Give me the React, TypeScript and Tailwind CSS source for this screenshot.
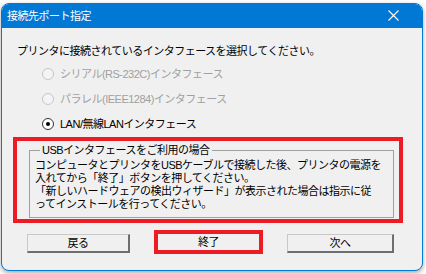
import React from "react";

const Radio = ({ label, checked, disabled }: { label: string; checked?: boolean; disabled?: boolean }) => (
  <div className="h-[25px] flex items-center">
    <span
      className={`w-[12px] h-[12px] rounded-full border flex items-center justify-center ${
        disabled ? "border-[#c6c6c6] bg-[#f4f4f4]" : "border-[#333333] bg-white"
      }`}
    >
      {checked && <span className="w-[4px] h-[4px] rounded-full bg-black" />}
    </span>
    <span className={`ml-[6px] ${disabled ? "text-[#a0a0a0]" : "text-black"}`}>{label}</span>
  </div>
);

const Btn = ({ label, className }: { label: string; className?: string }) => (
  <button
    className={`h-[19px] bg-[#f0f0f0] border-t border-l border-t-[#c8c8c8] border-l-[#c8c8c8] border-b-2 border-r-2 border-b-[#6e6e6e] border-r-[#6e6e6e] text-black leading-none ${className ?? ""}`}
  >
    {label}
  </button>
);

export default function App() {
  return (
    <div className="w-[426px] h-[274px] bg-white pt-[3px] pl-[1px] text-[11px] leading-[14px] tracking-[-0.5px] font-['Liberation_Sans','Noto_Sans_CJK_JP',sans-serif]">
      <div className="w-[422px] h-[268px] rounded-[8px] border border-[#0078d4] bg-[#f0f0f0] overflow-hidden flex flex-col shadow-[0_2px_5px_rgba(0,0,0,0.35)]">
        {/* Title bar */}
        <div className="h-[25px] bg-[#0078d4] flex items-center justify-between pl-[5px] pr-[23px] -mt-px">
          <span className="text-white">接続先ポート指定</span>
          <svg width="11" height="11" viewBox="0 0 11 11">
            <path d="M0.5 0.5 L10.5 10.5 M10.5 0.5 L0.5 10.5" stroke="white" strokeWidth="1.1" />
          </svg>
        </div>

        {/* Body */}
        <div className="flex-1 flex flex-col pt-[16px]">
          <p className="ml-[15px] text-black">プリンタに接続されているインタフェースを選択してください。</p>

          <div className="ml-[40px] mt-[3px] flex flex-col">
            <Radio label="シリアル(RS-232C)インタフェース" disabled />
            <Radio label="パラレル(IEEE1284)インタフェース" disabled />
            <Radio label="LAN/無線LANインタフェース" checked />
          </div>

          {/* USB note, marked in red */}
          <div className="ml-[11px] mt-[1px] w-[390px] h-[86px] border-4 border-[#ed1c24] pt-[2px]">
            <fieldset className="ml-[12px] w-[365px] border border-[#a0a0a0] pl-[5px] pt-[2px] pb-[6px] text-black">
              <legend className="ml-[5px] px-[2px]">USBインタフェースをご利用の場合</legend>
              <p className="leading-[13px]">
                コンピュータとプリンタをUSBケーブルで接続した後、プリンタの電源を
                <br />
                入れてから「終了」ボタンを押してください。
                <br />
                「新しいハードウェアの検出ウィザード」が表示された場合は指示に従
                <br />
                ってインストールを行ってください。
              </p>
            </fieldset>
          </div>

          {/* Buttons */}
          <div className="mt-[7px] flex items-start">
            <Btn label="戻る" className="ml-[25px] mt-[4px] w-[103px]" />
            <div className="ml-[24px] w-[109px] h-[24px] border-4 border-[#ed1c24] bg-[#f0f0f0] flex items-center justify-center text-black">
              終了
            </div>
            <Btn label="次へ" className="ml-[24px] mt-[4px] w-[107px]" />
          </div>
        </div>
      </div>
    </div>
  );
}
